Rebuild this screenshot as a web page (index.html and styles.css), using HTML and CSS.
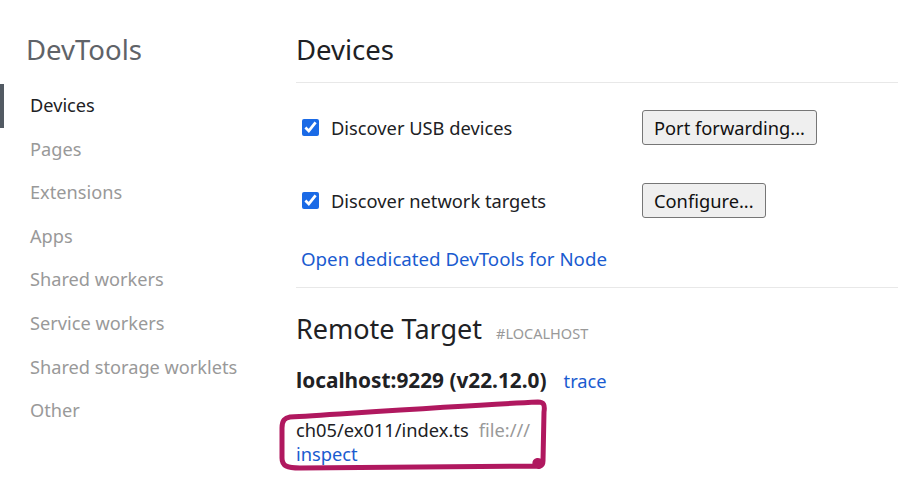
FILE: index.html
```html
<!DOCTYPE html>
<html lang="en">
<head>
<meta charset="utf-8">
<title>DevTools - Devices</title>
<link rel="stylesheet" href="styles.css">
</head>
<body>
<aside class="sidebar">
  <h1 class="brand">DevTools</h1>
  <nav class="nav">
    <a class="nav-item active">Devices</a>
    <a class="nav-item">Pages</a>
    <a class="nav-item">Extensions</a>
    <a class="nav-item">Apps</a>
    <a class="nav-item">Shared workers</a>
    <a class="nav-item">Service workers</a>
    <a class="nav-item">Shared storage worklets</a>
    <a class="nav-item">Other</a>
  </nav>
</aside>
<main class="main">
  <header class="page-head">
    <h2 class="page-title">Devices</h2>
  </header>
  <section class="settings">
    <div class="setting-row">
      <label class="check"><input type="checkbox" checked><span>Discover USB devices</span></label>
      <button class="btn">Port forwarding...</button>
    </div>
    <div class="setting-row second">
      <label class="check"><input type="checkbox" checked><span>Discover network targets</span></label>
      <button class="btn">Configure...</button>
    </div>
    <a class="link node-link">Open dedicated DevTools for Node</a>
  </section>
  <section class="remote">
    <h3 class="remote-title">Remote Target <span class="remote-tag">#LOCALHOST</span></h3>
    <div class="host"><span class="host-name">localhost:9229 (v22.12.0)</span><a class="link trace">trace</a></div>
    <div class="target">
      <div class="target-line"><span class="target-name">ch05/ex011/index.ts</span><span class="target-url">file:///</span></div>
      <a class="link">inspect</a>
    </div>
  </section>
</main>
<svg class="annotation" width="898" height="496" viewBox="0 0 898 496">
  <path d="M 290 417 C 340 414, 470 405, 538 402 C 544 402, 545 405, 544 412 L 543 461 C 543 467, 537 468, 535 464 C 534 460, 540 459, 541 463 L 538 466 L 300 468 C 287 468, 282 466, 282 458 L 282 428 C 282 420, 285 418, 290 417 Z" />
</svg>
</body>
</html>
```
FILE: styles.css
```css
html, body {
  margin: 0;
  padding: 0;
  background: #ffffff;
}
body {
  display: flex;
  width: 898px;
  height: 496px;
  overflow: hidden;
  font-family: "Noto Sans", "Open Sans", sans-serif;
  color: #202124;
  position: relative;
}
.sidebar {
  width: 296px;
  flex: none;
}
.brand {
  margin: 30px 0 13px 26px;
  font-size: 27.5px;
  line-height: 40px;
  font-weight: 400;
  color: #5f6368;
}
.nav {
  display: flex;
  flex-direction: column;
  padding-top: 1px;
}
.nav-item {
  display: block;
  height: 43.6px;
  line-height: 43.6px;
  font-size: 18.2px;
  color: #999999;
  border-left: 4px solid transparent;
  box-sizing: border-box;
  padding-left: 26px;
}
.nav-item.active {
  color: #202124;
  border-left-color: #525a63;
}
.main {
  flex: 1;
  min-width: 0;
}
.page-head {
  margin-top: 30px;
  border-bottom: 1px solid #e8e8e8;
  padding-bottom: 12px;
}
.page-title {
  margin: 0;
  font-size: 27.5px;
  line-height: 40px;
  font-weight: 400;
  color: #202124;
}
.settings {
  padding: 26px 0 16px 0;
  border-bottom: 1px solid #e8e8e8;
}
.setting-row {
  display: grid;
  grid-template-columns: 346px auto;
  align-items: center;
  height: 36px;
}
.setting-row.second {
  margin-top: 37px;
}
.check {
  display: flex;
  align-items: center;
  font-size: 18.3px;
  color: #202124;
}
.check input {
  width: 17px;
  height: 17px;
  margin: 0 12px 0 6px;
  accent-color: #1a6ae6;
}
.btn {
  justify-self: start;
  height: 35px;
  padding: 0 11px;
  font-family: inherit;
  font-size: 18.3px;
  color: #111;
  background: #efefef;
  border: 1px solid #767676;
  border-radius: 3px;
}
.link {
  color: #1a5bd0;
  text-decoration: none;
  cursor: pointer;
}
.node-link {
  display: block;
  margin: 29px 0 0 5px;
  font-size: 18.7px;
  line-height: 24px;
}
.remote {
  padding-top: 23px;
}
.remote-title {
  margin: 0;
  font-size: 27px;
  line-height: 36px;
  font-weight: 400;
  color: #202124;
}
.remote-tag {
  margin-left: 7px;
  font-size: 14.5px;
  color: #999;
}
.host {
  margin-top: 16px;
  line-height: 26px;
  font-size: 18.3px;
}
.host-name {
  font-weight: 700;
  font-size: 20.8px;
}
.trace {
  margin-left: 17px;
}
.target {
  margin-top: 24px;
  font-size: 18.3px;
  line-height: 24px;
}
.target-url {
  margin-left: 10px;
  color: #999;
}
.annotation {
  position: absolute;
  left: 0;
  top: 0;
  pointer-events: none;
}
.annotation path {
  fill: none;
  stroke: #b0185f;
  stroke-width: 5;
  stroke-linejoin: round;
  stroke-linecap: round;
}
```
